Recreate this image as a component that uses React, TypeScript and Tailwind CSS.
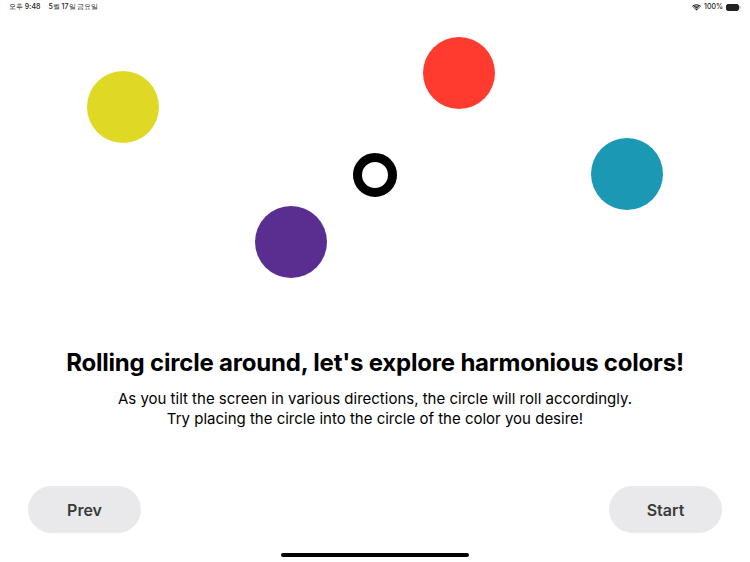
const circles = [
  { left: 87, top: 57, color: 'bg-[#dfd925]' },
  { left: 423, top: 23, color: 'bg-[#ff3b30]' },
  { left: 591, top: 124, color: 'bg-[#1b98b4]' },
  { left: 255, top: 192, color: 'bg-[#5a2d91]' },
];

const StatusBar = () => (
  <div className="h-[14px] flex items-center justify-between px-[9px] text-[7px] text-[#222] font-medium">
    <div className="flex gap-[8px]">
      <span>오후 9:48</span>
      <span>5월 17일 금요일</span>
    </div>
    <div className="flex items-center gap-[3px]">
      <svg width="9" height="7" viewBox="0 0 12 9" fill="#222">
        <path d="M6 8.6 4.2 6.8a2.6 2.6 0 0 1 3.6 0Z" />
        <path d="M2.9 5.5a4.4 4.4 0 0 1 6.2 0l-.9.9a3.1 3.1 0 0 0-4.4 0Z" />
        <path d="M1.4 4A6.5 6.5 0 0 1 10.6 4l-.9.9a5.2 5.2 0 0 0-7.4 0Z" />
        <path d="M0 2.6a8.5 8.5 0 0 1 12 0l-.9.9a7.2 7.2 0 0 0-10.2 0Z" />
      </svg>
      <span>100%</span>
      <svg width="15" height="7" viewBox="0 0 15 7">
        <rect x="0.5" y="0.5" width="12" height="6" rx="1.6" fill="#222" stroke="#222" />
        <rect x="13.3" y="2.3" width="1.2" height="2.4" rx="0.5" fill="#999" />
      </svg>
    </div>
  </div>
);

export default function App() {
  return (
    <div className="w-[750px] h-[562px] bg-white flex flex-col font-['Inter','Liberation_Sans',sans-serif] overflow-hidden">
      <StatusBar />
      <div className="relative h-[316px]">
        {circles.map((c, i) => (
          <div
            key={i}
            className={`absolute w-[72px] h-[72px] rounded-full ${c.color}`}
            style={{ left: c.left, top: c.top }}
          />
        ))}
        <div className="absolute left-[353px] top-[139px] w-[44px] h-[44px] rounded-full border-[9px] border-black" />
      </div>
      <h1 className="mt-[18px] text-center text-[24px] leading-[30px] font-bold text-black tracking-[-0.2px]">
        Rolling circle around, let's explore harmonious colors!
      </h1>
      <p className="mt-[11px] text-center text-[15px] leading-[20px] text-black">
        As you tilt the screen in various directions, the circle will roll accordingly.
        <br />
        Try placing the circle into the circle of the color you desire!
      </p>
      <div className="mt-[57px] flex justify-between px-[28px]">
        <button className="w-[113px] h-[47px] rounded-full bg-[#e9e9eb] text-[16px] font-semibold text-[#3a3a3c]">
          Prev
        </button>
        <button className="w-[113px] h-[47px] rounded-full bg-[#e9e9eb] text-[16px] font-semibold text-[#3a3a3c]">
          Start
        </button>
      </div>
      <div className="mt-[20px] flex justify-center">
        <div className="w-[188px] h-[4px] rounded-full bg-black" />
      </div>
    </div>
  );
}
